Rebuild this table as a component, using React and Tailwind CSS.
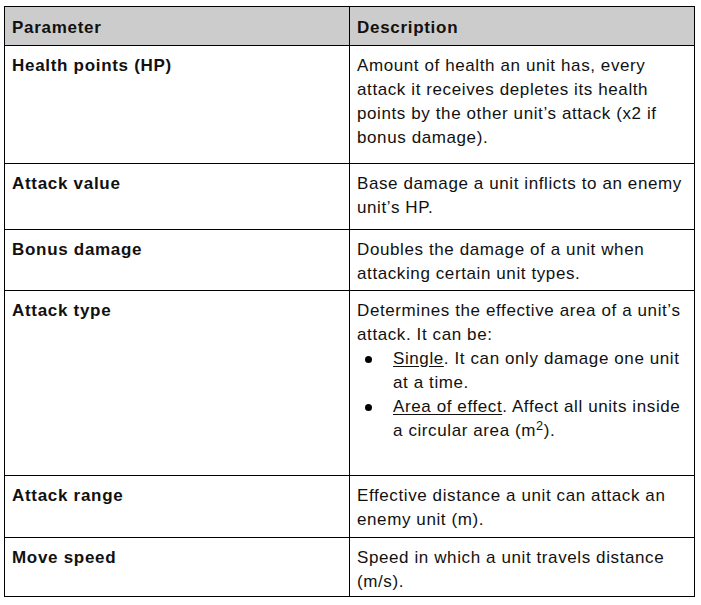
const rows = [
  {
    name: "Health points (HP)",
    h: "h-[118px]",
    lines: [
      "Amount of health an unit has, every",
      "attack it receives depletes its health",
      "points by the other unit’s attack (x2 if",
      "bonus damage).",
    ],
  },
  {
    name: "Attack value",
    h: "h-[66px]",
    lines: ["Base damage a unit inflicts to an enemy", "unit’s HP."],
  },
  {
    name: "Bonus damage",
    h: "h-[61px]",
    lines: ["Doubles the damage of a unit when", "attacking certain unit types."],
  },
  {
    name: "Attack type",
    h: "h-[185px]",
    custom: true,
  },
  {
    name: "Attack range",
    h: "h-[62px]",
    lines: ["Effective distance a unit can attack an", "enemy unit (m)."],
  },
  {
    name: "Move speed",
    h: "h-[58px]",
    lines: ["Speed in which a unit travels distance", "(m/s)."],
    last: true,
  },
];

const Bullet = ({ children }) => (
  <div className="flex items-start">
    <div className="w-[36px] shrink-0 pl-[8px] pt-[9px]">
      <div className="w-[7px] h-[7px] rounded-full bg-black" />
    </div>
    <div>{children}</div>
  </div>
);

const AttackTypeCell = () => (
  <div>
    <div>Determines the effective area of a unit’s</div>
    <div>attack. It can be:</div>
    <Bullet>
      <span className="underline underline-offset-2">Single</span>. It can only damage one unit
      <br />
      at a time.
    </Bullet>
    <Bullet>
      <span className="underline underline-offset-2">Area of effect</span>. Affect all units inside
      <br />
      a circular area (m<sup>2</sup>).
    </Bullet>
  </div>
);

export default function App() {
  return (
    <div className="bg-white min-h-[605px] pt-[6px] pl-[4px] font-['Liberation_Sans',Arial,sans-serif] text-[#111] text-[17px] leading-[24px] tracking-[0.6px]">
      <div className="w-[691px] border border-black">
        {/* header */}
        <div className="flex h-[39px] bg-[#cccccc] border-b border-black font-bold tracking-[0.7px]">
          <div className="w-[345px] shrink-0 border-r border-black px-[7px] pt-[9px]">Parameter</div>
          <div className="flex-1 px-[7px] pt-[9px]">Description</div>
        </div>

        {rows.map((row) => (
          <div
            key={row.name}
            className={`flex ${row.h} ${row.last ? "" : "border-b border-black"}`}
          >
            <div className="w-[345px] shrink-0 border-r border-black px-[7px] pt-[8px] font-bold tracking-[0.7px]">
              {row.name}
            </div>
            <div className="flex-1 px-[7px] pt-[8px] whitespace-nowrap">
              {row.custom ? (
                <AttackTypeCell />
              ) : (
                row.lines.map((l) => <div key={l}>{l}</div>)
              )}
            </div>
          </div>
        ))}
      </div>
    </div>
  );
}
